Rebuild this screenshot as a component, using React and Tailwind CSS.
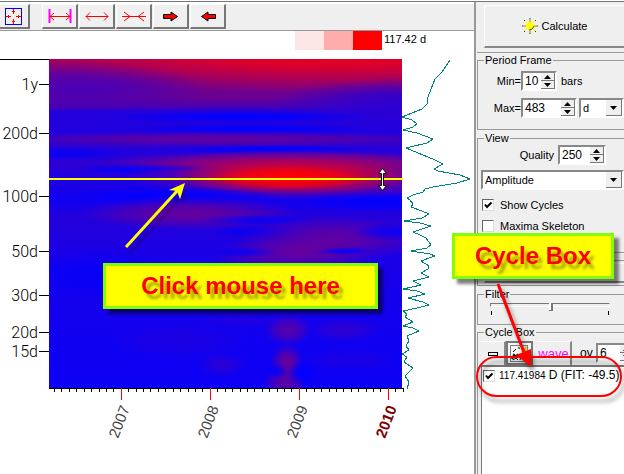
import React, { useState } from 'react';

const YEARS = [
  { label: '2007', x: 121 },
  { label: '2008', x: 210 },
  { label: '2009', x: 299 },
  { label: '2010', x: 388, current: true },
];

const PERIODS = [
  { label: '1y', y: 84 },
  { label: '200d', y: 133 },
  { label: '100d', y: 196 },
  { label: '50d', y: 251 },
  { label: '30d', y: 295 },
  { label: '20d', y: 332 },
  { label: '15d', y: 351 },
];

const SPECTRUM =
  '450,60 448,63 442,72 435,79 431,89 428,97 427,104 422,109 412,113 402,117 412,120 417,124 413,127 403,130 417,133 433,139 427,143 406,148 423,155 435,160 443,164 434,169 438,171 460,175 470,179 457,183 433,187 425,189 423,192 413,195 407,198 410,200 413,204 411,207 422,211 429,214 422,218 404,221 420,223 431,226 413,232 420,235 426,238 431,245 427,248 411,251 430,254 435,256 421,261 429,266 428,269 421,273 429,277 413,281 421,285 403,289 417,291 425,294 408,298 423,302 429,305 417,308 403,311 407,314 405,317 413,322 403,326 413,328 419,331 407,336 409,341 406,346 409,350 402,354 407,357 404,362 413,368 405,376 409,382 407,389';

// [cx, cy, rx, ry, color, opacity]
const SPOTS = [
  [330, 48, 320, 46, '#f80010', 0.95],
  [80, 88, 130, 26, '#4000c0', 0.8],
  [400, 104, 130, 26, '#2c00d2', 1],
  [240, 117, 140, 6, '#0000ff', 1],
  [250, 129, 130, 5, '#0000ff', 1],
  [220, 139, 200, 8, '#7a0088', 0.6],
  [60, 154, 80, 8, '#0000ff', 0.7],
  [270, 149, 120, 4, '#0000ff', 1],
  [280, 164, 180, 13, '#b0005c', 0.85],
  [150, 169, 80, 5, '#0000ff', 1],
  [310, 175, 185, 26, '#a80060', 0.9],
  [290, 177, 120, 18, '#f00010', 0.9],
  [288, 178, 80, 12, '#ff0000', 1],
  [170, 196, 110, 10, '#0000ff', 0.9],
  [380, 202, 90, 10, '#0000ff', 0.9],
  [190, 213, 110, 17, '#840080', 0.7],
  [260, 220, 60, 5, '#0000ff', 0.8],
  [260, 232, 50, 7, '#0000ff', 0.8],
  [335, 238, 100, 22, '#7c0088', 0.7],
  [295, 255, 85, 18, '#840080', 0.65],
  [345, 251, 32, 4, '#0000ff', 0.9],
  [242, 252, 36, 5, '#0000ff', 0.8],
  [390, 232, 40, 9, '#0000ff', 0.8],
  [100, 275, 90, 26, '#0000ff', 0.7],
  [288, 330, 24, 16, '#780088', 0.7],
  [345, 330, 36, 12, '#4400bb', 0.6],
  [287, 362, 16, 18, '#84007e', 0.8],
  [285, 383, 22, 18, '#80007e', 0.7],
  [303, 373, 16, 12, '#0000ff', 1],
  [276, 371, 12, 8, '#0000ff', 0.8],
  [222, 365, 24, 12, '#4000c0', 0.6],
  [180, 340, 70, 20, '#2400da', 0.6],
  [240, 320, 50, 8, '#2c00d2', 0.5],
  [350, 360, 50, 12, '#2400da', 0.6],
];

function CycleChart() {
  return (
    <svg viewBox="0 31 474 443" className="block w-full" role="img" aria-label="Cycle spectrogram">
      <defs>
        <linearGradient id="bands" x1="0" y1="0" x2="0" y2="1">
          <stop offset="0" stopColor="#980068" />
          <stop offset="0.06" stopColor="#7a0084" />
          <stop offset="0.12" stopColor="#680094" />
          <stop offset="0.145" stopColor="#4800b4" />
          <stop offset="0.16" stopColor="#2200dc" />
          <stop offset="0.22" stopColor="#2000df" />
          <stop offset="0.245" stopColor="#3c00c2" />
          <stop offset="0.28" stopColor="#2200dc" />
          <stop offset="0.31" stopColor="#3000d0" />
          <stop offset="0.36" stopColor="#2000e0" />
          <stop offset="0.43" stopColor="#1000f0" />
          <stop offset="0.48" stopColor="#2400da" />
          <stop offset="0.6" stopColor="#1a00e6" />
          <stop offset="0.85" stopColor="#1000f0" />
          <stop offset="1" stopColor="#0c00f4" />
        </linearGradient>
        {SPOTS.map(([, , , , color, opacity], i) => (
          <radialGradient key={i} id={`spot${i}`}>
            <stop offset="0" stopColor={color} stopOpacity={opacity} />
            <stop offset="0.4" stopColor={color} stopOpacity={opacity * 0.75} />
            <stop offset="1" stopColor={color} stopOpacity="0" />
          </radialGradient>
        ))}
        <filter id="arrowShade" x="-20%" y="-20%" width="150%" height="150%">
          <feDropShadow dx="4" dy="6" stdDeviation="1" floodColor="#200060" floodOpacity="0.4" />
        </filter>
        <clipPath id="plotArea">
          <rect x="49" y="59" width="353" height="329" />
        </clipPath>
      </defs>

      <g clipPath="url(#plotArea)">
        <rect x="49" y="59" width="353" height="329" fill="url(#bands)" />
        {SPOTS.map(([cx, cy, rx, ry], i) => (
          <ellipse key={i} cx={cx} cy={cy} rx={rx} ry={ry} fill={`url(#spot${i})`} />
        ))}
      </g>

      {/* period axis */}
      <path d="M0 59.5H49" stroke="#000" />
      {PERIODS.map((p) => (
        <g key={p.label}>
          <path d={`M39 ${p.y + 0.5}H49`} stroke="#000" />
          <text x="38" y={p.y + 6} textAnchor="end" fontSize="16" className="font-['Roboto',sans-serif] font-light">
            {p.label}
          </text>
        </g>
      ))}

      {/* time axis */}
      <path d="M49 388.5H403" stroke="#000" />
      {Array.from({ length: 48 }, (_, i) => Math.round(54 + i * 7.42)).filter((x) => x < 404).map((x) => (
        <path key={x} d={`M${x + 0.5} 388V392`} stroke="#000" />
      ))}
      {YEARS.map((y) => (
        <g key={y.label}>
          <path d={`M${y.x + 0.5} 388V400`} stroke="#f00" />
          <text
            transform={`translate(${y.x - 3} 439) rotate(-69)`}
            fontSize="15"
            fontWeight={y.current ? 700 : 400}
            fill={y.current ? '#800000' : '#444'}
            className="font-['Liberation_Sans',sans-serif]"
          >
            {y.label}
          </text>
        </g>
      ))}

      <polyline points={SPECTRUM} fill="none" stroke="#008080" strokeLinejoin="round" shapeRendering="crispEdges" />

      {/* selected period */}
      <path d="M49 179H403" stroke="#ff0" strokeWidth="2" />
      <path d="M382.500 168.500l4 5h-3v12h3l-4 5-4-5h3v-12h-3z" fill="#fff" stroke="#000" />

      <g filter="url(#arrowShade)">
        <path d="M126 247L178 190" stroke="#ff0" strokeWidth="3" />
        <path d="M185 183L169 190L177 191L180 199Z" fill="#ff0" />
      </g>

      {/* amplitude scale */}
      <rect x="295" y="31" width="29" height="19" fill="#fce6e6" />
      <rect x="324" y="31" width="29" height="19" fill="#ffacac" />
      <rect x="353" y="31" width="29" height="19" fill="#f00" />
      <text x="384" y="43" fontSize="11" className="font-['Liberation_Sans',sans-serif]">
        117.42 d
      </text>
    </svg>
  );
}

function ToolButton({ label, children }) {
  return (
    <button
      aria-label={label}
      className="flex h-[25px] w-9 items-center justify-center border-t border-r-2 border-b-2 border-l border-t-white border-r-[#777] border-b-[#777] border-l-white bg-[#eff0ef]"
    >
      {children}
    </button>
  );
}

function Toolbar() {
  return (
    <div className="flex h-[27px] items-start border-b border-[#999] bg-[#eeefee]">
      <div className="mr-3 -ml-1.5">
        <ToolButton label="Fit to window">
          <svg width="17" height="17" fill="none" className="ml-1">
            <rect x="0.500" y="0.500" width="16" height="16" stroke="#00f" />
            <path d="M8.500 1v5M8.500 11v5M1 8.500h5M11 8.500h5M7 3.500h3M7 13.500h3M3.500 7v3M13.500 7v3" stroke="#f00" />
          </svg>
        </ToolButton>
      </div>
      <div className="flex gap-px">
        <ToolButton label="Fit width">
          <svg width="24" height="15" fill="none" stroke="#f00">
            <path d="M1.500 0v14M22.500 0v14" stroke="#f0f" strokeWidth="2" />
            <path d="M2 7.500h20M6 4L2 7.500L6 11M18 4l4 3.500L18 11" />
          </svg>
        </ToolButton>
        <ToolButton label="Stretch">
          <svg width="24" height="11" fill="none" stroke="#f00">
            <path d="M1 5.500h22M5 1.500L1 5.500L5 9.500M19 1.500l4 4L19 9.500" />
          </svg>
        </ToolButton>
        <ToolButton label="Compress">
          <svg width="24" height="11" fill="none" stroke="#f00">
            <path d="M0 5.500h24M2 1l6 4.500L2 10M22 1l-6 4.500L22 10" />
          </svg>
        </ToolButton>
        <ToolButton label="Scroll right">
          <svg width="16" height="11" fill="#f00" stroke="#000">
            <path d="M0.500 3.500H8V1L14.500 5.500L8 10V7.500H0.500Z" />
          </svg>
        </ToolButton>
        <ToolButton label="Scroll left">
          <svg width="16" height="11" fill="#f00" stroke="#000">
            <path d="M15.500 3.500H8V1L1.500 5.500L8 10V7.500H15.500Z" />
          </svg>
        </ToolButton>
      </div>
    </div>
  );
}

function Group({ title, className, children }) {
  return (
    <fieldset className={`min-w-0 border border-r-0 border-[#999] ${className}`}>
      <legend className="ml-1.5 px-px leading-[14px]">{title}</legend>
      {children}
    </fieldset>
  );
}

function Spinner({ id, value, onChange, width }) {
  return (
    <div className={`flex h-5 shrink-0 border-2 border-t-[#888] border-r-white border-b-white border-l-[#888] bg-white ${width}`}>
      <input
        id={id}
        value={value}
        onChange={(e) => onChange(e.target.value)}
        className="min-w-0 flex-1 bg-white pl-0.5 text-[12px] leading-4 outline-none"
      />
      <div className="flex w-3.5 shrink-0 flex-col">
        <button aria-label="Increase" onClick={() => onChange(String(Number(value) + 1))} className="flex h-2 items-center justify-center border-r border-b border-[#777] bg-[#eeefee]">
          <svg width="7" height="4"><path d="M0 4L3.500 0L7 4Z" /></svg>
        </button>
        <button aria-label="Decrease" onClick={() => onChange(String(Number(value) - 1))} className="flex h-2 items-center justify-center border-r border-b border-[#777] bg-[#eeefee]">
          <svg width="7" height="4"><path d="M0 0L3.500 4L7 0Z" /></svg>
        </button>
      </div>
    </div>
  );
}

function Select({ label, options, className }) {
  return (
    <div className={`relative h-5 border-2 border-t-[#888] border-r-white border-b-white border-l-[#888] bg-white ${className}`}>
      <select aria-label={label} className="block h-4 w-full appearance-none bg-white pl-0.5 text-[11px] leading-4 outline-none">
        {options.map((o) => <option key={o}>{o}</option>)}
      </select>
      <span className="pointer-events-none absolute top-0 right-0 flex h-4 w-4 items-center justify-center border-r border-b border-[#777] bg-[#eeefee]">
        <svg width="7" height="4"><path d="M0 0L3.500 4L7 0Z" /></svg>
      </span>
    </div>
  );
}

function Check({ checked, onChange, children, className }) {
  return (
    <label className={`flex items-center ${className}`}>
      <span className="flex shrink-0">
        <input
          type="checkbox"
          checked={checked}
          onChange={onChange}
          className="peer h-3 w-3 appearance-none border border-t-[#666] border-r-[#ddd] border-b-[#ddd] border-l-[#666] bg-white"
        />
        <svg width="12" height="12" className="pointer-events-none invisible -ml-3 peer-checked:visible" fill="none" stroke="#000" strokeWidth="2">
          <path d="M3 5.500L5 8L9.500 3.500" />
        </svg>
      </span>
      {children}
    </label>
  );
}

function CycleBox() {
  const [overtones, setOvertones] = useState('6');
  const [cycleOn, setCycleOn] = useState(true);

  return (
    <Group title="Cycle Box" className="flex flex-1 flex-col border-b-0">
      <div className="mt-0.5 flex h-6 items-center overflow-hidden pl-[3px]">
        <button aria-label="Remove cycle" className="flex h-6 w-[25px] shrink-0 items-center justify-center border-t border-r-2 border-t-white border-r-[#888]">
          <svg width="10" height="4"><rect x="0.500" y="0.500" width="9" height="3" fill="#eeefee" stroke="#000" /></svg>
        </button>
        <button aria-label="Edit cycles" className="flex h-6 w-[27px] shrink-0 items-center justify-center border-2 border-[#777] bg-[#f6f6f6]">
          <svg width="19" height="17" fill="none" stroke="#000">
            <rect x="0.500" y="0.500" width="17" height="16" strokeDasharray="1 1" />
            <path d="M2 14l2-4 2 2 2-3" strokeWidth="2" />
            <path d="M3 15l3-2 2 2M10 15l1-5 3 1 1 4M12 13h2M3 7l3-3M8 3h2" />
            <path d="M12 7l4-5M14 5l4 1" stroke="#d8d800" strokeWidth="2" />
          </svg>
        </button>
        <button className="ml-1 h-6 w-[35px] shrink-0 border-t border-r-2 border-t-white border-r-[#888] text-[13px] leading-5 text-[#f0f]">wave</button>
        <label htmlFor="overtones" className="w-6 shrink-0 pl-2 text-[12px]">ov</label>
        <Spinner id="overtones" value={overtones} onChange={setOvertones} width="w-10" />
      </div>
      <div className="ml-[3px] flex-1 border-t-2 border-l border-[#777] bg-white">
        <Check checked={cycleOn} onChange={() => setCycleOn(!cycleOn)} className="ml-px gap-1 text-[12px] leading-4 whitespace-nowrap">
          <span>
            <span className="text-[10px]">117.41984</span> D (FIT: -49.5)
          </span>
        </Check>
      </div>
    </Group>
  );
}

function SidePanel() {
  const [min, setMin] = useState('10');
  const [max, setMax] = useState('483');
  const [quality, setQuality] = useState('250');
  const [showCycles, setShowCycles] = useState(true);
  const [skeleton, setSkeleton] = useState(false);
  const [filter, setFilter] = useState(51);

  return (
    <aside className="flex w-[150px] shrink-0 flex-col border-l-2 border-[#999] bg-[#eeefee] pl-px">
      <div className="border-b border-[#999] pt-[3px] pb-1 pl-[7px]">
        <button className="flex h-[43px] w-full items-center justify-center gap-1 border-t border-b-2 border-l border-t-white border-b-[#888] border-l-white">
          <svg width="16" height="16" viewBox="0 0 16 16">
            <path d="M8 0v16M0 8h16M2 2l12 12M14 2L2 14" stroke="#333" />
            <path d="M8 1v14M1 8h14M3 3l10 10M13 3L3 13" stroke="#ff0" />
            <circle cx="8" cy="8" r="4" fill="#ff0" />
            <path d="M7 12q4 0 5-4" fill="none" stroke="#554" />
          </svg>
          Calculate
        </button>
      </div>

      <Group title="Period Frame" className="mb-px h-[77px]">
        <div className="mt-1 flex items-center pl-[17px]">
          <label htmlFor="min" className="w-[26px] text-right">Min=</label>
          <Spinner id="min" value={min} onChange={setMin} width="w-9" />
          <span className="pl-1">bars</span>
        </div>
        <div className="mt-[7px] flex items-center pl-3">
          <label htmlFor="max" className="w-[31px] text-right">Max=</label>
          <Spinner id="max" value={max} onChange={setMax} width="w-14" />
          <Select label="Period unit" options={['d', 'w', 'm']} className="ml-0.5 min-w-0 flex-1" />
        </div>
      </Group>

      <Group title="View" className="h-[122px]">
        <div className="flex items-center gap-1 pl-10">
          <label htmlFor="quality" className="w-9 text-right">Quality</label>
          <Spinner id="quality" value={quality} onChange={setQuality} width="w-12" />
        </div>
        <Select label="View mode" options={['Amplitude', 'Energy']} className="mt-[5px] ml-[3px]" />
        <Check checked={showCycles} onChange={() => setShowCycles(!showCycles)} className="mt-[7px] ml-1 gap-1.5">Show Cycles</Check>
        <Check checked={skeleton} onChange={() => setSkeleton(!skeleton)} className="mt-1 ml-1 gap-1.5">Maxima Skeleton</Check>
      </Group>

      <div className="mt-[7px] h-[26px] border border-r-0 border-[#999] pt-0.5 pl-1.5">
        <button aria-label="Apply view" className="block h-5 w-full border-t border-b-2 border-l border-t-white border-b-[#888] border-l-white" />
      </div>

      <Group title="Filter" className="mt-px h-[38px]">
        <div className="ml-3 w-[120px]">
          <input
            type="range"
            aria-label="Filter"
            value={filter}
            onChange={(e) => setFilter(e.target.value)}
            className="block h-2 w-full appearance-none bg-transparent [&::-webkit-slider-runnable-track]:h-1 [&::-webkit-slider-runnable-track]:border [&::-webkit-slider-runnable-track]:border-t-[#777] [&::-webkit-slider-runnable-track]:border-r-white [&::-webkit-slider-runnable-track]:border-b-white [&::-webkit-slider-runnable-track]:border-l-[#777] [&::-webkit-slider-thumb]:-mt-px [&::-webkit-slider-thumb]:h-2 [&::-webkit-slider-thumb]:w-1 [&::-webkit-slider-thumb]:appearance-none [&::-webkit-slider-thumb]:border-r-2 [&::-webkit-slider-thumb]:border-b [&::-webkit-slider-thumb]:border-[#777] [&::-webkit-slider-thumb]:bg-white"
          />
          <div className="mx-px mt-0.5 flex h-1 justify-between border-r border-l border-black" />
        </div>
      </Group>

      <CycleBox />
    </aside>
  );
}

function Callout({ children, className }) {
  return (
    <div
      className={`absolute flex items-center justify-center border-[3px] border-[#80ff00] bg-[#ff0] text-[24px] font-bold text-[#f00] shadow-[5px_5px_3px_rgba(0,0,0,0.5)] [text-shadow:4px_5px_3px_rgba(0,0,0,0.35)] ${className}`}
    >
      {children}
    </div>
  );
}

function CycleMarker() {
  return (
    <svg width="150" height="130" className="pointer-events-none absolute top-[279px] right-0 drop-shadow-[3px_5px_2px_rgba(0,0,0,0.4)]" fill="none">
      <rect x="3" y="78" width="144" height="39" rx="19.500" stroke="#f00" strokeWidth="2" />
      <path d="M24 5L51 76" stroke="#f00" strokeWidth="3" />
      <path d="M57 88L42 76L57 70Z" fill="#f00" />
    </svg>
  );
}

export default function App() {
  return (
    <main className="relative flex min-h-screen overflow-hidden bg-white pt-px font-['Liberation_Sans',sans-serif] text-[11px] text-black">
      <section className="relative min-w-0 flex-1 border-t border-[#777] pt-0.5">
        <Toolbar />
        <CycleChart />
        <Callout className="top-[261px] left-[103px] h-[46px] w-[275px]">Click mouse here</Callout>
      </section>
      <div className="flex shrink-0 border-t border-[#777]">
        <SidePanel />
      </div>
      <Callout className="top-[233px] right-[10px] h-[46px] w-[162px]">Cycle Box</Callout>
      <CycleMarker />
    </main>
  );
}
